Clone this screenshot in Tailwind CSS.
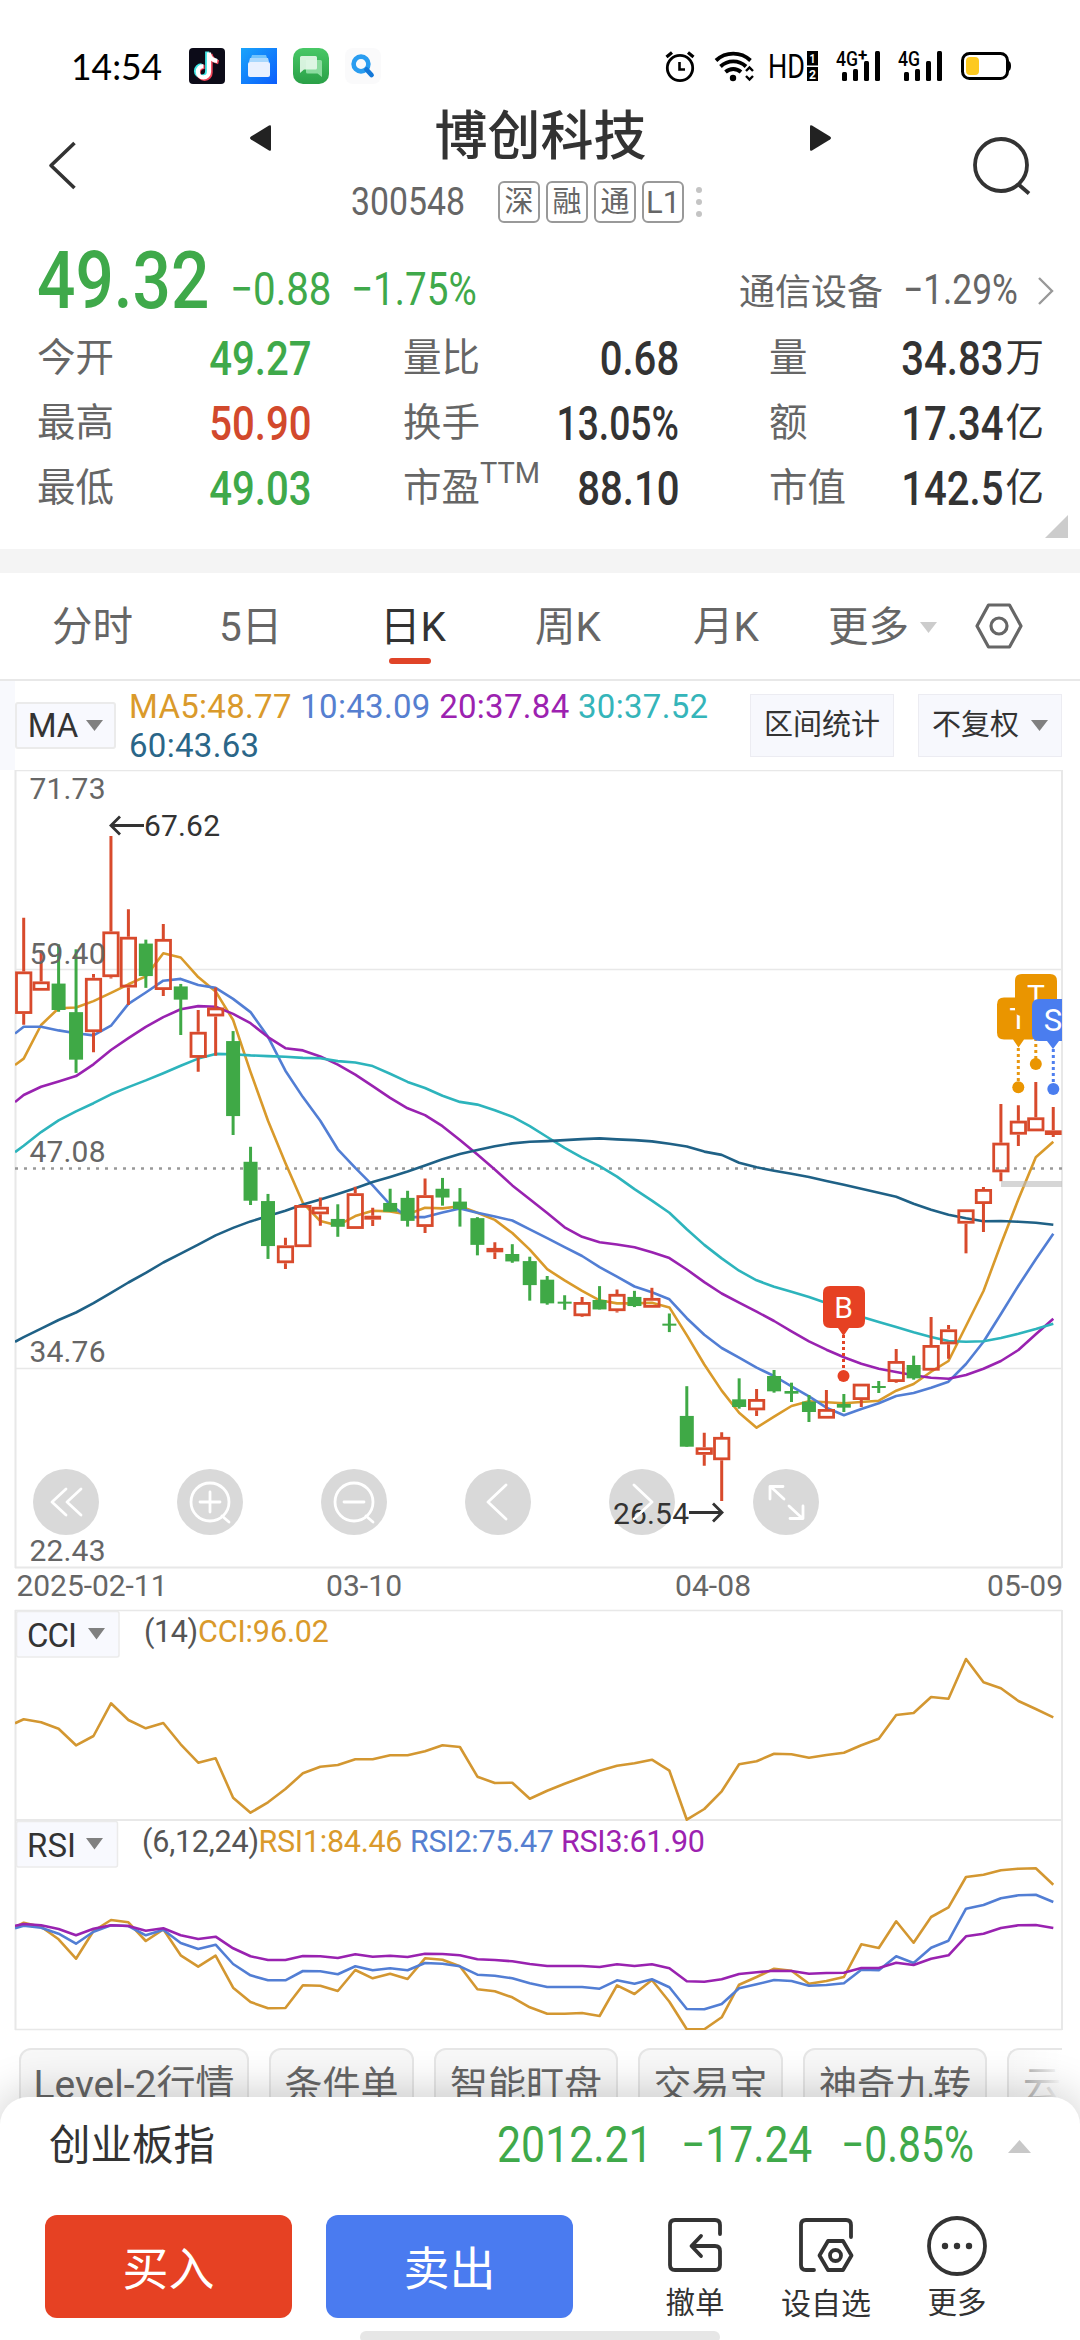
<!DOCTYPE html>
<html lang="zh-CN">
<head>
<meta charset="utf-8">
<title>博创科技 300548</title>
<script src="https://cdn.jsdelivr.net/npm/@tailwindcss/browser@4"></script>
</head>
<body class="bg-white">
<div class="relative w-[1080px] h-[2340px] overflow-hidden bg-white font-['Roboto','Noto_Sans_CJK_SC',sans-serif] leading-none text-[#333]">

  <!-- status bar -->
  <div class="flex h-[96px] items-center pt-[36px] pl-[71px] pr-[48px]">
    <div class="w-[118px] text-[36px] text-black whitespace-nowrap font-['Lato','Roboto',sans-serif]"><span class="inline-block origin-left scale-x-[.985]">14:54</span></div>
    <div class="flex gap-[16px]">
      <svg width="36" height="36" viewBox="0 0 36 36"><rect width="36" height="36" rx="4" fill="#0c0b18"/><g fill="none" stroke-width="4.2"><path d="M19.2 4v19.5a5.6 5.6 0 1 1-5.6-5.6M19.2 6c1 4 4 6.500 9 7" stroke="#3fe6e6" transform="translate(-1 -.6)"/><path d="M21 5v19a6 6 0 1 1-6-6M21 6c1 4 4 6.500 8 7.500" stroke="#ee4459" transform="translate(.6 .8)"/><path d="M20 4.500v19.300a5.600 5.600 0 1 1-5.600-5.600M20 6c1 4 4 6.500 8.300 7" stroke="#fff"/></g></svg>
      <svg width="36" height="36" viewBox="0 0 36 36"><defs><linearGradient id="fb" x1="0" y1="0" x2="1" y2="1"><stop offset="0" stop-color="#19a4fb"/><stop offset="1" stop-color="#0b5dfc"/></linearGradient></defs><rect width="36" height="36" fill="url(#fb)"/><path d="M11 7h14l1 3H10z" fill="#72c3fc"/><path d="M9 10h18l1 4H8z" fill="#a9d8fd"/><rect x="7" y="14" width="22" height="15" rx="2" fill="#e9f1ff"/></svg>
      <svg width="36" height="36" viewBox="0 0 36 36"><defs><linearGradient id="ms" x1="0" y1="0" x2="0" y2="1"><stop offset="0" stop-color="#48c866"/><stop offset="1" stop-color="#2aa047"/></linearGradient></defs><rect width="36" height="36" rx="10" fill="url(#ms)"/><path d="M13 12h14.500q1.500 0 1.500 1.500V29l-4.500-3.500H14.500q-1.500 0-1.500-1.500z" fill="#8bdc9f"/><path d="M8.500 8h14q1.500 0 1.500 1.500V20q0 1.500-1.500 1.500H11L7 25V9.500Q7 8 8.500 8z" fill="#e4f7e8" fill-opacity=".92"/></svg>
      <svg width="36" height="36" viewBox="0 0 36 36"><rect width="36" height="36" rx="8" fill="#fafafb"/><circle cx="16" cy="16" r="7.400" fill="none" stroke="#2a9df0" stroke-width="4.600"/><path d="M21.500 21.500l5 5.500" stroke="#1478d8" stroke-width="4.800" stroke-linecap="round"/></svg>
    </div>
    <svg class="ml-auto overflow-visible" width="367" height="36" viewBox="665 48 367 36" fill="none" stroke="#000">
      <circle cx="680" cy="68" r="12.700" stroke-width="2.800"/><path d="M679.500 62v7.500h5.500" stroke-width="2.600"/><path d="M666.500 57l5.500-4.500M693.500 57l-5.500-4.500" stroke-width="3.200"/>
      <g stroke-width="3.800"><path d="M716 60.500a25 25 0 0 1 34.500 0"/><path d="M720.500 66.500a18.500 18.500 0 0 1 25.500 0"/><path d="M725.500 72a11.500 11.500 0 0 1 15.500 0"/></g><circle cx="733" cy="78" r="3.200" fill="#000" stroke="none"/><path d="M746 71l3.500-3.500 3.500 3.500M746 76l3.500 3.500 3.500-3.500" stroke-width="2.400"/>
      <g fill="#000" stroke="none" font-family="Roboto">
        <text x="768" y="78" font-size="34" textLength="37" lengthAdjust="spacingAndGlyphs">HD</text>
        <rect x="807" y="51" width="11" height="14.500"/><rect x="807" y="67" width="11" height="14"/>
        <text x="809.500" y="63" font-size="13" font-weight="700" fill="#fff" textLength="6" lengthAdjust="spacingAndGlyphs">1</text><text x="809" y="79" font-size="13" font-weight="700" fill="#fff" textLength="7" lengthAdjust="spacingAndGlyphs">2</text>
        <text x="836" y="66" font-size="20" font-weight="500" textLength="22" lengthAdjust="spacingAndGlyphs">4G</text><text x="858" y="60.500" font-size="17" font-weight="700">+</text>
        <rect x="842" y="72" width="5" height="9" rx="1.500"/><rect x="853" y="69" width="5" height="12" rx="1.500"/><rect x="864" y="61" width="5" height="20" rx="1.500"/><rect x="875" y="51" width="5" height="30" rx="1.500"/>
        <text x="898" y="66" font-size="20" font-weight="500" textLength="22" lengthAdjust="spacingAndGlyphs">4G</text>
        <rect x="904" y="72" width="5" height="9" rx="1.500"/><rect x="915" y="69" width="5" height="12" rx="1.500"/><rect x="926" y="61" width="5" height="20" rx="1.500"/><rect x="937" y="51" width="5" height="30" rx="1.500"/>
      </g>
      <rect x="962.500" y="53.500" width="45" height="25" rx="7" stroke-width="3"/><rect x="966" y="57" width="13" height="18" rx="4" fill="#fdc920" stroke="none"/><path d="M1008 61q3 0 3 5t-3 5z" fill="#000" stroke="none"/>
    </svg>
  </div>

  <!-- title bar -->
  <header class="flex h-[144px] px-[48px]">
    <svg class="mt-[44px]" width="30" height="52" viewBox="0 0 30 52" fill="none" stroke="#333" stroke-width="3.600" stroke-linejoin="round"><path d="M26.500 3L3 25.500 26.500 48"/></svg>
    <div class="ml-[171px] flex w-[583px] flex-col">
      <div class="mt-[15px] flex h-[54px] items-center justify-between">
        <svg width="22" height="28" viewBox="0 0 22 28"><path d="M22 2.500v23q0 2-2 1L2 15.500Q0 14 2 12.500L20 1.500q2-1 2 1z" fill="#222"/></svg>
        <h1 class="mb-[2px] text-[53px] font-medium">博创科技</h1>
        <svg width="22" height="28" viewBox="0 0 22 28"><path d="M0 2.500v23q0 2 2 1L20 15.500q2-1.500 0-3L2 1.500q-2-1-2 1z" fill="#222"/></svg>
      </div>
      <div class="mt-[16px] flex items-center pl-[102px] text-[#666]">
        <span class="inline-block w-[147px] origin-left scale-x-[.855] text-[39.500px]">300548</span>
        <div class="flex gap-[6px] text-[29px]">
          <span class="flex h-[42px] w-[42px] items-center justify-center rounded-[6px] border-2 border-[#999]">深</span>
          <span class="flex h-[42px] w-[42px] items-center justify-center rounded-[6px] border-2 border-[#999]">融</span>
          <span class="flex h-[42px] w-[42px] items-center justify-center rounded-[6px] border-2 border-[#999]">通</span>
          <span class="flex h-[42px] w-[42px] items-center justify-center rounded-[6px] border-2 border-[#999] text-[31px]">L1</span>
        </div>
        <svg class="ml-[12px]" width="6" height="32" fill="#c4c4c4"><circle cx="3" cy="4" r="3"/><circle cx="3" cy="16" r="3"/><circle cx="3" cy="28" r="3"/></svg>
      </div>
    </div>
    <svg class="mt-[38px] ml-auto" width="60" height="62" viewBox="972 134 60 62" fill="none" stroke="#333" stroke-width="3.800"><circle cx="1001" cy="165" r="26"/><path d="M1018 184l11 9.500"/></svg>
  </header>

  <!-- quote summary -->
  <section class="h-[309px] px-[37px]">
    <div class="flex h-[74px] items-end text-[#3fa94a]">
      <span class="mb-[-7px] h-[80px] w-[193px] origin-left scale-x-[.845] text-[80px] font-medium">49.32</span>
      <span class="mb-[2px] h-[46px] w-[121px] origin-left scale-x-[.875] text-[46px] whitespace-nowrap">−0.88</span>
      <span class="mb-[2px] h-[46px] origin-left scale-x-[.84] text-[46px] whitespace-nowrap">−1.75%</span>
      <span class="mb-[3px] ml-auto h-[36px] text-[36px] text-[#666]">通信设备</span>
      <span class="mb-[3px] ml-[20px] h-[42px] w-[137px] origin-left scale-x-[.84] text-[42px] whitespace-nowrap text-[#666]">−1.29%</span>
      <svg class="mb-[8px] mr-[-12px] ml-[-3px]" width="18" height="30" viewBox="0 0 18 30" fill="none" stroke="#999" stroke-width="2.400"><path d="M2 2l13 13L2 28"/></svg>
    </div>
    <div class="mt-[12px] grid grid-cols-[274px_276px_55px_401px] text-[38.500px] text-[#666]">
      <div class="flex h-[65px] items-center justify-between"><span>今开</span><span class="origin-right scale-x-[.835] text-[48px] font-medium text-[#3fa94a]">49.27</span></div>
      <div class="col-span-2 ml-[92px] flex h-[65px] w-[276px] items-center justify-between"><span>量比</span><span class="origin-right scale-x-[.835] text-[48px] font-medium text-[#333]">0.68</span></div>
      <div class="ml-[127px] flex h-[65px] w-[275px] items-center justify-between"><span>量</span><span class="flex items-center gap-[2px] text-[#333]"><span class="origin-right scale-x-[.835] text-[48px] font-medium">34.83</span>万</span></div>

      <div class="flex h-[65px] items-center justify-between"><span>最高</span><span class="origin-right scale-x-[.835] text-[48px] font-medium text-[#d2492c]">50.90</span></div>
      <div class="col-span-2 ml-[92px] flex h-[65px] w-[276px] items-center justify-between"><span>换手</span><span class="origin-right scale-x-[.775] text-[48px] font-medium text-[#333]">13.05%</span></div>
      <div class="ml-[127px] flex h-[65px] w-[275px] items-center justify-between"><span>额</span><span class="flex items-center gap-[2px] text-[#333]"><span class="origin-right scale-x-[.835] text-[48px] font-medium">17.34</span>亿</span></div>

      <div class="flex h-[65px] items-center justify-between"><span>最低</span><span class="origin-right scale-x-[.835] text-[48px] font-medium text-[#3fa94a]">49.03</span></div>
      <div class="col-span-2 ml-[92px] flex h-[65px] w-[276px] items-center justify-between"><span class="flex">市盈<span class="mt-[-10px] text-[29px]">TTM</span></span><span class="origin-right scale-x-[.835] text-[48px] font-medium text-[#333]">88.10</span></div>
      <div class="ml-[127px] flex h-[65px] w-[275px] items-center justify-between"><span>市值</span><span class="flex items-center gap-[2px] text-[#333]"><span class="origin-right scale-x-[.835] text-[48px] font-medium">142.5</span>亿</span></div>
    </div>
    <svg class="mt-[-6px] mr-[-25px] ml-auto block" width="23" height="23"><path d="M23 0v23H0z" fill="#ccc"/></svg>
  </section>

  <div class="h-[24px] bg-[#f4f4f4]"></div>

  <!-- period tabs -->
  <nav class="flex h-[108px] items-center border-b-2 border-[#e8e8e8] pt-[2px] pl-[52px] text-[40.500px] text-[#666]">
    <span class="w-[167px]">分时</span>
    <span class="w-[161px]">5日</span>
    <span class="relative w-[155px] text-[#333]">日K<i class="absolute top-[51px] left-[9px] h-[6px] w-[42px] rounded-full bg-[#e04428]"></i></span>
    <span class="w-[158px]">周K</span>
    <span class="w-[135px]">月K</span>
    <span>更多</span>
    <svg class="ml-[11px]" width="17" height="11"><path d="M0 0h17L8.500 11z" fill="#ccc"/></svg>
    <svg class="mb-[2px] ml-[38px]" width="48" height="46" viewBox="0 0 48 46" fill="none" stroke="#666" stroke-width="3.200" stroke-linejoin="round"><path d="M13.500 2h21L46 23 34.500 44h-21L2 23z"/><circle cx="24" cy="23" r="8"/></svg>
  </nav>

  <!-- moving averages toolbar -->
  <div class="flex h-[89px] items-center bg-white">
    <div class="h-full w-[15px] bg-[#f8f9fd]"></div>
    <div class="flex h-[47px] w-[101px] items-center justify-center gap-[8px] rounded-[3px] border-2 border-[#ebebeb] bg-[#f8f9fe] text-[33px]">MA<svg width="17" height="11"><path d="M0 0h17L8.500 11z" fill="#808080"/></svg></div>
    <div class="ml-[13px] w-[621px] text-[33px] leading-[39px] tracking-[.3px] whitespace-nowrap text-[#da9a2b]">MA5:48.77 <span class="text-[#567fd0]">10:43.09</span> <span class="text-[#9c22b0]">20:37.84</span> <span class="text-[#35b5ba]">30:37.52</span><br><span class="text-[#2a6688]">60:43.63</span></div>
    <div class="flex h-[63px] w-[144px] items-center justify-center border border-[#ececf2] bg-[#f7f8fd] text-[29px]">区间统计</div>
    <div class="ml-[24px] flex h-[63px] w-[144px] items-center justify-center gap-[12px] border border-[#ececf2] bg-[#f7f8fd] text-[29px]">不复权<svg width="17" height="11"><path d="M0 0h17L8.500 11z" fill="#808080"/></svg></div>
  </div>

  <!-- price, CCI and RSI charts -->
  <svg id="chart" class="block" width="1080" height="1262" viewBox="0 770 1080 1262" font-family="Roboto" fill="none">
    <defs><clipPath id="plot"><rect x="15" y="770" width="1047" height="1260"/></clipPath></defs>
    <g stroke="#e8e8e8" stroke-width="1.500">
      <path d="M15 770.500H1062M15 969.500H1062M15 1368.500H1062M15 1610.500H1062M15 2029.500H1062"/>
      <path d="M15 1567.500H1062M15 1820H1062M15.500 770V1568M1062 770V1568M15.500 1610V2030M1062 1610V2030" stroke-width="2"/>
    </g>
    <path d="M15 1168.500H1062" stroke="#999" stroke-width="2.600" stroke-dasharray="3 6"/>
    <g id="controls" fill="#d9d9d9"><circle cx="66" cy="1502" r="33"/><circle cx="210" cy="1502" r="33"/><circle cx="354" cy="1502" r="33"/><circle cx="498" cy="1502" r="33"/><circle cx="642" cy="1502" r="33"/><circle cx="786" cy="1502" r="33"/></g>
    <g clip-path="url(#plot)"><g id="series"></g></g>
    <g fill="#666" font-size="30">
      <text x="29.500" y="799" textLength="76">71.73</text><text x="29.500" y="963.500" textLength="76">59.40</text><text x="29.500" y="1162" textLength="76">47.08</text><text x="29.500" y="1361.500" textLength="76">34.76</text><text x="29.500" y="1561" textLength="76">22.43</text>
      <text x="16.500" y="1596" textLength="151">2025-02-11</text><text x="326" y="1596" textLength="76">03-10</text><text x="675" y="1596" textLength="76">04-08</text><text x="987" y="1596" textLength="76">05-09</text>
    </g>
    <g fill="#333" font-size="30"><text x="144" y="836" textLength="76">67.62</text><text x="613" y="1524" textLength="76">26.54</text></g>
    <path d="M144 825.500H111M120 816.500l-9 9 9 9M689 1512.500H722M713 1503.500l9 9-9 9" stroke="#333" stroke-width="2.800"/>
    <g stroke="#fff" stroke-width="2.800" stroke-linecap="round" stroke-linejoin="round">
      <path d="M66 1489l-14 13 14 13M81 1489l-14 13 14 13"/>
      <circle cx="210" cy="1502" r="19"/><path d="M222 1516l7 6M200 1502h20M210 1492v20"/>
      <circle cx="354" cy="1502" r="19"/><path d="M366 1516l7 6M344 1502h20"/>
      <path d="M506 1485l-18 17 18 17M634 1485l18 17-18 17"/>
      <path d="M784 1499l-13-12M770 1499v-12.500h13M789 1506l13 12M803 1506v12.500h-13"/>
    </g>
    <rect x="1001" y="1181" width="61" height="6" fill="#bbb" fill-opacity=".6"/>
    <g clip-path="url(#plot)" font-size="32" fill="#fff" text-anchor="middle">
      <path d="M843.500 1335v38" stroke="#e24326" stroke-width="3" stroke-dasharray="3 3"/><circle cx="843.500" cy="1376" r="6" fill="#e64123"/>
      <path d="M830 1286h28q7 0 7 7v28q0 7-7 7h-9l-5.500 8-5.500-8h-8q-7 0-7-7v-28q0-7 7-7z" fill="#e64123"/><text x="843.500" y="1317.500" font-size="30">B</text>
      <path d="M1018.300 1048v38M1035.800 1020v40" stroke="#e89710" stroke-width="3" stroke-dasharray="3 3"/><circle cx="1018.300" cy="1087.300" r="6" fill="#ea9500"/><circle cx="1035.800" cy="1064" r="6" fill="#ea9500"/>
      <path d="M1004 997.500h28q7 0 7 7v28q0 7-7 7h-8l-5.500 8-5.500-8h-9q-7 0-7-7v-28q0-7 7-7z" fill="#ea9500"/><text x="1018.500" y="1029" font-size="30">T</text>
      <path d="M1022 974h28q7 0 7 7v28q0 7-7 7h-8l-6 8-6-8h-8q-7 0-7-7v-28q0-7 7-7z" fill="#ea9500"/><text x="1036" y="1005.500" font-size="30">T</text>
      <path d="M1053.300 1049v38" stroke="#4f7fef" stroke-width="3" stroke-dasharray="3 3"/><circle cx="1053.300" cy="1089" r="6" fill="#4a7def"/>
      <path d="M1039 999h28q7 0 7 7v28q0 7-7 7h-8l-6 8-6-8h-8q-7 0-7-7v-28q0-7 7-7z" fill="#4a7def"/><text x="1053" y="1030.500" font-size="31">S</text>
    </g>
    <g stroke="#ebebeb" stroke-width="1.500" fill="#f8f9fe"><rect x="16.500" y="1611.500" width="102.500" height="45.500" rx="2"/><rect x="16.500" y="1821.500" width="101" height="45.500" rx="2"/></g>
    <g fill="#333" font-size="33"><text x="27" y="1647" textLength="50">CCI</text><text x="27" y="1857" textLength="49">RSI</text></g>
    <path d="M88 1628h17l-8.500 11.500zM86 1838h17l-8.500 11.500z" fill="#808080"/>
    <g font-size="30.500"><text x="144" y="1642" fill="#555" textLength="54">(14)</text><text x="198" y="1642" fill="#da9a2b" textLength="131">CCI:96.02</text>
      <text x="142" y="1852" fill="#555" textLength="117">(6,12,24)</text><text x="258.500" y="1852" fill="#da9a2b" textLength="144">RSI1:84.46</text><text x="410" y="1852" fill="#567fd0" textLength="144">RSI2:75.47</text><text x="561" y="1852" fill="#9c22b0" textLength="144">RSI3:61.90</text></g>
  </svg>

  <!-- tool shortcuts -->
  <div class="mt-[16px] flex items-start pl-[19px] text-[38px] whitespace-nowrap text-[#666]">
    <div class="mr-[20px] flex h-[74px] w-[230px] shrink-0 items-center justify-center rounded-[12px] border-2 border-[#e6e6e6] bg-[#f8f8f8] text-[39px]">Level-2行情</div>
    <div class="mr-[20px] flex h-[74px] w-[145px] shrink-0 items-center justify-center rounded-[12px] border-2 border-[#e6e6e6] bg-[#f8f8f8]">条件单</div>
    <div class="mr-[20px] flex h-[74px] w-[184px] shrink-0 items-center justify-center rounded-[12px] border-2 border-[#e6e6e6] bg-[#f8f8f8]">智能盯盘</div>
    <div class="mr-[20px] flex h-[74px] w-[145px] shrink-0 items-center justify-center rounded-[12px] border-2 border-[#e6e6e6] bg-[#f8f8f8]">交易宝</div>
    <div class="mr-[20px] flex h-[74px] w-[184px] shrink-0 items-center justify-center rounded-[12px] border-2 border-[#e6e6e6] bg-[#f8f8f8]">神奇九转</div>
    <div class="relative flex h-[74px] w-[55px] shrink-0 items-center overflow-hidden rounded-tl-[12px] border-2 border-r-0 border-[#e6e6e6] bg-[#f8f8f8] pl-[14px]">云<i class="absolute inset-y-[-2px] right-0 w-[60px] bg-linear-to-r from-white/20 to-white"></i></div>
  </div>

  <!-- index ticker and trade bar -->
  <footer class="absolute bottom-0 left-0 h-[243px] w-[1080px] rounded-t-[28px] bg-white shadow-[0_-4px_44px_rgba(0,0,0,0.2)]">
    <div class="flex h-[98px] items-center pl-[49px]">
      <span class="text-[41.500px]">创业板指</span>
      <span class="ml-[282px] w-[184px] origin-left scale-x-[.865] text-[49.500px] text-[#3fa94a]">2012.21</span>
      <span class="w-[160px] origin-left scale-x-[.86] text-[49.500px] whitespace-nowrap text-[#3fa94a]">−17.24</span>
      <span class="w-[167px] origin-left scale-x-[.825] text-[49.500px] whitespace-nowrap text-[#3fa94a]">−0.85%</span>
      <svg width="23" height="13"><path d="M0 13h23L11.500 0z" fill="#c8c8c8"/></svg>
    </div>
    <div class="flex pt-[20px] pl-[45px]">
      <button class="h-[103px] w-[247px] rounded-[12px] bg-[#e64123] pt-[4px] text-[46px] text-white">买入</button>
      <button class="ml-[34px] h-[103px] w-[247px] rounded-[12px] bg-[#4a7bf0] pt-[4px] text-[46px] text-white">卖出</button>
      <div class="ml-[77px] flex w-[90px] flex-col items-center text-[29.500px]">
        <svg width="60" height="60" viewBox="0 0 60 60" fill="none" stroke="#333" stroke-width="3.800" stroke-linecap="round" stroke-linejoin="round"><path d="M55 19V10q0-5-5-5H10q-5 0-5 5v40q0 5 5 5h40q5 0 5-5V36q0-5-5-5H27M36 21l-9.500 10L36 41"/></svg>
        <span class="mt-[14px]">撤单</span>
      </div>
      <div class="ml-[36px] flex w-[100px] flex-col items-center text-[30px] whitespace-nowrap">
        <svg width="60" height="60" viewBox="0 0 60 60" fill="none" stroke="#333" stroke-width="3.800" stroke-linecap="round" stroke-linejoin="round"><path d="M55 22V10q0-5-5-5H10q-5 0-5 5v40q0 5 5 5h8M32 26h15l8.500 14.500L47 55H32l-8.500-14.500z"/><circle cx="39.500" cy="40.500" r="5.500"/></svg>
        <span class="mt-[14px]">设自选</span>
      </div>
      <div class="ml-[36px] flex w-[90px] flex-col items-center text-[29.500px]">
        <svg width="60" height="62" viewBox="0 0 60 62"><circle cx="30" cy="31" r="28" fill="none" stroke="#333" stroke-width="3.800"/><g fill="#333"><circle cx="18" cy="31" r="3.200"/><circle cx="30" cy="31" r="3.200"/><circle cx="42" cy="31" r="3.200"/></g></svg>
        <span class="mt-[12px]">更多</span>
      </div>
    </div>
    <div class="mt-[12px] ml-[360px] h-[12px] w-[360px] rounded-[6px] bg-[#e6e6e6]"></div>
  </footer>
</div>

<script>
const NS = 'http://www.w3.org/2000/svg';
const layer = document.getElementById('series');
const X0 = 23.7, STEP = 17.45;
const RED = '#d84a2c', GREEN = '#3fa946';
function el(tag, attrs) {
  const n = document.createElementNS(NS, tag);
  for (const k in attrs) n.setAttribute(k, attrs[k]);
  layer.appendChild(n);
}
// vertical ranges of the three chart segments: [first bar, y origin, units per pixel]
const segs = [[0, 760, 2.8], [21, 1040, 2.958], [41, 960, 3]];
const y = (s, v) => segs[s][1] + v / segs[s][2];

// bar: direction, high, body top, body bottom, low
const bars = [
 ['R 442 592 711 741','R 533 620 646 646','G 516 626 700 705','G 530 706 839 876','R 599 610 762 818','R 213 480 608 612','R 418 495 637 686','G 503 514 605 638','R 459 501 644 661','G 627 634 671 770','R 700 761 834 873','R 637 693 718 828','G 759 787 997 1050','G 1083 1125 1234 1246','G 1215 1235 1361 1397','R 1338 1359 1409 1425','R 1246 1246 1364 1364','R 1225 1251 1272 1304','G 1244 1285 1307 1335','R 1195 1213 1313 1313','R 1254 1276 1287 1305'],
 ['G 440 482 508 508','G 446 467 535 552','R 410 459 553 571','G 408 440 466 490','G 438 478 500 552','G 524 527 606 637','R 598 615 628 648','G 604 633 655 659','G 641 654 725 771','G 698 709 779 783','G 755 774 779 798','R 760 775 817 819','G 728 769 797 797','R 738 751 802 806','G 742 760 787 790','R 733 763 792 792','G 809 839 845 864','G 1024 1112 1203 1203','R 1162 1205 1227 1259','R 1160 1174 1243 1364'],
 ['G 1255 1318 1341 1346','R 1287 1317 1351 1368','G 1230 1248 1294 1298','G 1268 1293 1301 1326','G 1305 1325 1356 1386','R 1290 1347 1376 1376','G 1302 1332 1343 1356','R 1271 1271 1320 1341','G 1263 1278 1283 1299','R 1167 1203 1266 1268','G 1187 1215 1255 1259','R 1071 1155 1232 1232','R 1095 1108 1153 1196','R 748 748 791 880','R 681 687 732 816','R 432 548 637 664','R 436 482 524 558','R 366 472 514 514','R 441 511 525 531']
];
// moving averages per segment; the first value lies on the left edge of the plot
const averages = {
 '#1f6186': [[1629,1616,1592,1568,1547,1521,1492,1463,1436,1407,1382,1357,1331,1310,1292,1277,1262,1245,1231,1215,1199,1182],[405,389,371,353,337,325,314,306,301,299,296,293,291,294,296,300,307,315,330,340],[608,622,632,641,651,663,674,686,698,710,731,749,764,775,784,783,785,788,794]],
 '#2db4bc': [[1098,1080,1042,1009,984,961,936,916,897,877,856,836,823,824,827,829,831,834,835,843,847,857],[100,124,142,165,183,191,208,227,255,287,319,348,373,404,441,475,511,560,606,646],[932,961,980,995,1011,1029,1053,1070,1086,1101,1117,1131,1143,1145,1144,1134,1121,1107,1091]],
 '#9922b0': [[958,938,915,900,885,852,812,779,747,720,698,689,691,711,737,776,807,813,830,853,881,913],[171,202,222,255,296,339,383,430,471,512,554,582,598,605,613,628,645,679,716,750],[1028,1055,1083,1114,1144,1169,1192,1211,1226,1236,1246,1253,1256,1245,1226,1203,1170,1123,1076]],
 '#527ed4': [[766,747,747,757,765,771,744,683,651,618,613,630,638,669,706,775,870,944,1010,1090,1142,1191],[487,524,524,510,498,511,522,534,560,586,613,639,672,700,729,746,767,823,872,911],[1193,1223,1248,1279,1309,1343,1366,1347,1330,1308,1299,1283,1265,1212,1145,1062,977,898,821]],
 '#d99a2b': [[854,836,742,695,693,675,652,628,606,541,553,608,648,728,873,1010,1128,1240,1291,1303,1277,1262],[507,516,496,498,492,511,532,571,620,678,711,742,770,779,779,777,791,873,960,1037],[1358,1403,1370,1338,1324,1327,1330,1326,1322,1292,1272,1235,1203,1098,993,853,718,592,545]]
};
function polyline(ys, color, width) {
  const pts = ys.map((v, k) => (k === 0 ? 15 : X0 + (k - 1) * STEP).toFixed(1) + ',' + v.toFixed(1)).join(' ');
  el('polyline', { points: pts, stroke: color, 'stroke-width': width, 'stroke-linejoin': 'round' });
}
for (const color of ['#d99a2b', '#527ed4', '#9922b0', '#2db4bc', '#1f6186'])
  polyline(averages[color].flatMap((a, s) => a.map(v => y(s, v))), color, 2.6);

let i = 0;
bars.forEach((list, s) => list.forEach(row => {
  const p = row.split(' ');
  const [h, t, b, l] = p.slice(1).map(v => y(s, +v));
  const cx = X0 + i * STEP;
  if (p[0] === 'G') {
    el('path', { d: `M${cx} ${h}V${l}`, stroke: GREEN, 'stroke-width': 3 });
    el('rect', { x: cx - 7, y: t, width: 14, height: Math.max(b - t, 2), fill: GREEN });
  } else {
    el('path', { d: `M${cx} ${h}V${t}M${cx} ${b}V${l}`, stroke: RED, 'stroke-width': 3 });
    if (b - t < 5.5) el('rect', { x: cx - 8.4, y: t, width: 16.8, height: b - t, fill: RED });
    else el('rect', { x: cx - 7.2, y: t + 1.4, width: 14.4, height: b - t - 2.8, stroke: RED, 'stroke-width': 2.8 });
  }
  i++;
}));

// oscillators, three units per pixel below y = 1600
const osc = [
 ['#d39731', [370,358,367,386,436,408,310,360,385,369,433,488,475,593,638,607,567,520,500,495,478,478,466,466,454,436,441,530,549,548,596,572,551,532,512,497,490,479,512,659,627,574,493,484,461,463,473,465,458,436,416,345,339,291,296,177,247,265,303,327,352]],
 ['#d39731', [982,968,980,1018,1076,993,960,967,1023,988,1066,1100,1067,1163,1206,1225,1224,1156,1157,1173,1110,1135,1121,1137,1075,1079,1099,1168,1174,1192,1222,1241,1241,1239,1248,1156,1182,1140,1205,1288,1288,1252,1154,1131,1106,1112,1151,1143,1131,1033,1044,964,1028,951,922,831,824,811,806,805,854]],
 ['#527ed4', [985,977,983,1001,1031,995,976,978,1006,989,1029,1047,1034,1092,1126,1141,1141,1113,1114,1123,1099,1111,1105,1111,1089,1091,1099,1124,1127,1135,1150,1161,1161,1161,1166,1141,1151,1138,1162,1227,1228,1212,1165,1153,1140,1143,1157,1155,1150,1109,1111,1069,1089,1043,1022,926,915,895,886,884,906]],
 ['#9922b0', [977,972,976,987,1006,986,976,978,992,985,1006,1017,1010,1045,1069,1080,1080,1068,1069,1074,1063,1070,1067,1071,1061,1062,1066,1078,1080,1084,1092,1098,1098,1098,1101,1093,1098,1093,1105,1144,1145,1138,1122,1117,1112,1113,1121,1119,1118,1104,1104,1088,1095,1076,1066,1009,1001,984,976,975,984]]
];
for (const [color, vals] of osc) polyline(vals.map(v => 1600 + v / 3), color, 2.6);
</script>
</body>
</html>
